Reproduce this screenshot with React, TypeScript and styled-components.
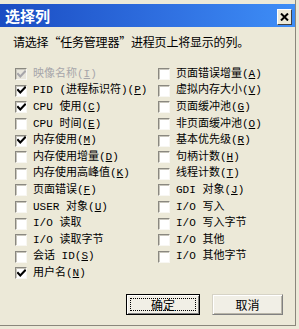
import React from "react";
import styled, { createGlobalStyle } from "styled-components";

const Global = createGlobalStyle`
  html, body { margin: 0; padding: 0; background: #ece9d8; }
  body { font-family: "Liberation Mono", "Noto Sans CJK SC", monospace; }
`;

const Screen = styled.div`
  width: 299px;
  height: 329px;
  background: #ece9d8;
  overflow: hidden;
`;

const Window = styled.div`
  width: 296px;
  height: 326px;
  box-sizing: border-box;
  border-right: 1px solid #8a877c;
  border-bottom: 1px solid #8a877c;
  padding-top: 4px;
  display: flex;
  flex-direction: column;
`;

const TitleBar = styled.div`
  height: 23px;
  display: flex;
  align-items: center;
  justify-content: space-between;
  padding: 0 3px 0 5px;
  background: linear-gradient(to right, #1a4cc2 0%, #2f6fe0 55%, #3e8ef7 100%);
`;

const Title = styled.span`
  color: #ffffff;
  font-family: "Noto Sans CJK SC", sans-serif;
  font-weight: 700;
  font-size: 15px;
  line-height: 17px;
`;

const CloseButton = styled.div`
  width: 15px;
  height: 16px;
  margin-top: 3px;
  background: #ece9d8;
  box-sizing: border-box;
  border-top: 1px solid #ffffff;
  border-left: 1px solid #ffffff;
  border-right: 1px solid #404040;
  border-bottom: 1px solid #404040;
  display: flex;
  align-items: center;
  justify-content: center;
`;

const Body = styled.div`
  flex: 1;
  display: flex;
  flex-direction: column;
  padding: 8px 0 0 0;
`;

const Instruction = styled.div`
  padding-left: 13px;
  font-family: "Noto Sans CJK SC", sans-serif;
  font-size: 12px;
  line-height: 14px;
  color: #000;
  letter-spacing: -0.2px;
`;

const Columns = styled.div`
  margin-top: 17px;
  padding-left: 15px;
  display: grid;
  grid-template-columns: 143px 1fr;
  grid-template-rows: repeat(13, 16.6px);
  grid-auto-flow: column;
`;

const Row = styled.label<{ $disabled?: boolean }>`
  display: flex;
  align-items: center;
  gap: 6px;
  font-size: 11px;
  line-height: 13px;
  color: ${(p) => (p.$disabled ? "#a7a6aa" : "#000")};
  white-space: nowrap;
`;

const Box = styled.span<{ $disabled?: boolean }>`
  width: 12px;
  height: 12px;
  box-sizing: border-box;
  flex: none;
  background: ${(p) => (p.$disabled ? "#e8e6dc" : "#ffffff")};
  border-top: 1px solid #8a8880;
  border-left: 1px solid #8a8880;
  border-right: 1px solid #f8f7f2;
  border-bottom: 1px solid #f8f7f2;
  box-shadow: inset 1px 1px 0 #c8c6bc;
  display: flex;
  align-items: center;
  justify-content: center;
`;

const Key = styled.span`
  text-decoration: underline;
`;

const Buttons = styled.div`
  margin-top: 12px;
  display: flex;
  justify-content: flex-end;
  gap: 12px;
  padding-right: 12px;
`;

const Button = styled.div<{ $default?: boolean }>`
  width: ${(p) => (p.$default ? 74 : 71)}px;
  height: 21px;
  box-sizing: border-box;
  background: #f1efe6;
  font-family: "Noto Sans CJK SC", sans-serif;
  font-size: 12px;
  color: #000;
  display: flex;
  align-items: center;
  justify-content: center;
  position: relative;
  border: 1px solid ${(p) => (p.$default ? "#000" : "#d6d3c6")};
  border-right-color: ${(p) => (p.$default ? "#000" : "#808080")};
  border-bottom-color: ${(p) => (p.$default ? "#000" : "#808080")};
  box-shadow: ${(p) =>
    p.$default
      ? "inset 1px 1px 0 #ffffff, inset -1px -1px 0 #808080"
      : "inset 1px 1px 0 #ffffff, inset -1px -1px 0 #b8b5a8"};
`;

const Focus = styled.span`
  position: absolute;
  inset: 3px;
  border: 1px dotted #000;
`;

const Label = styled.span`
  position: relative;
`;

const Check = ({ color }: { color: string }) => (
  <svg width="9" height="9" viewBox="0 0 9 9">
    <path d="M1 4 L3.3 6.5 L8 1.5" fill="none" stroke={color} strokeWidth="2" strokeLinecap="square" />
  </svg>
);

type Item = { text: string; key?: string; checked?: boolean; disabled?: boolean };

const items: Item[] = [
  { text: "映像名称", key: "I", checked: true, disabled: true },
  { text: "PID (进程标识符)", key: "P", checked: true },
  { text: "CPU 使用", key: "C", checked: true },
  { text: "CPU 时间", key: "E" },
  { text: "内存使用", key: "M", checked: true },
  { text: "内存使用增量", key: "D" },
  { text: "内存使用高峰值", key: "K" },
  { text: "页面错误", key: "F" },
  { text: "USER 对象", key: "U" },
  { text: "I/O 读取" },
  { text: "I/O 读取字节" },
  { text: "会话 ID", key: "S" },
  { text: "用户名", key: "N", checked: true },
  { text: "页面错误增量", key: "A" },
  { text: "虚拟内存大小", key: "V" },
  { text: "页面缓冲池", key: "G" },
  { text: "非页面缓冲池", key: "O" },
  { text: "基本优先级", key: "R" },
  { text: "句柄计数", key: "H" },
  { text: "线程计数", key: "T" },
  { text: "GDI 对象", key: "J" },
  { text: "I/O 写入" },
  { text: "I/O 写入字节" },
  { text: "I/O 其他" },
  { text: "I/O 其他字节" },
];

export default function App() {
  return (
    <Screen>
      <Global />
      <Window>
        <TitleBar>
          <Title>选择列</Title>
          <CloseButton>
            <svg width="9" height="8" viewBox="0 0 9 8">
              <path d="M1 0.5 L8 7.5 M8 0.5 L1 7.5" stroke="#000" strokeWidth="2" />
            </svg>
          </CloseButton>
        </TitleBar>
        <Body>
          <Instruction>请选择“任务管理器”进程页上将显示的列。</Instruction>
          <Columns>
            {items.map((it, i) => (
              <Row key={i} $disabled={it.disabled}>
                <Box $disabled={it.disabled}>
                  {it.checked && <Check color={it.disabled ? "#a7a6aa" : "#000"} />}
                </Box>
                <span>
                  {it.text}
                  {it.key && (
                    <>
                      (<Key>{it.key}</Key>)
                    </>
                  )}
                </span>
              </Row>
            ))}
          </Columns>
          <Buttons>
            <Button $default>
              <Focus />
              <Label>确定</Label>
            </Button>
            <Button>
              <Label>取消</Label>
            </Button>
          </Buttons>
        </Body>
      </Window>
    </Screen>
  );
}
